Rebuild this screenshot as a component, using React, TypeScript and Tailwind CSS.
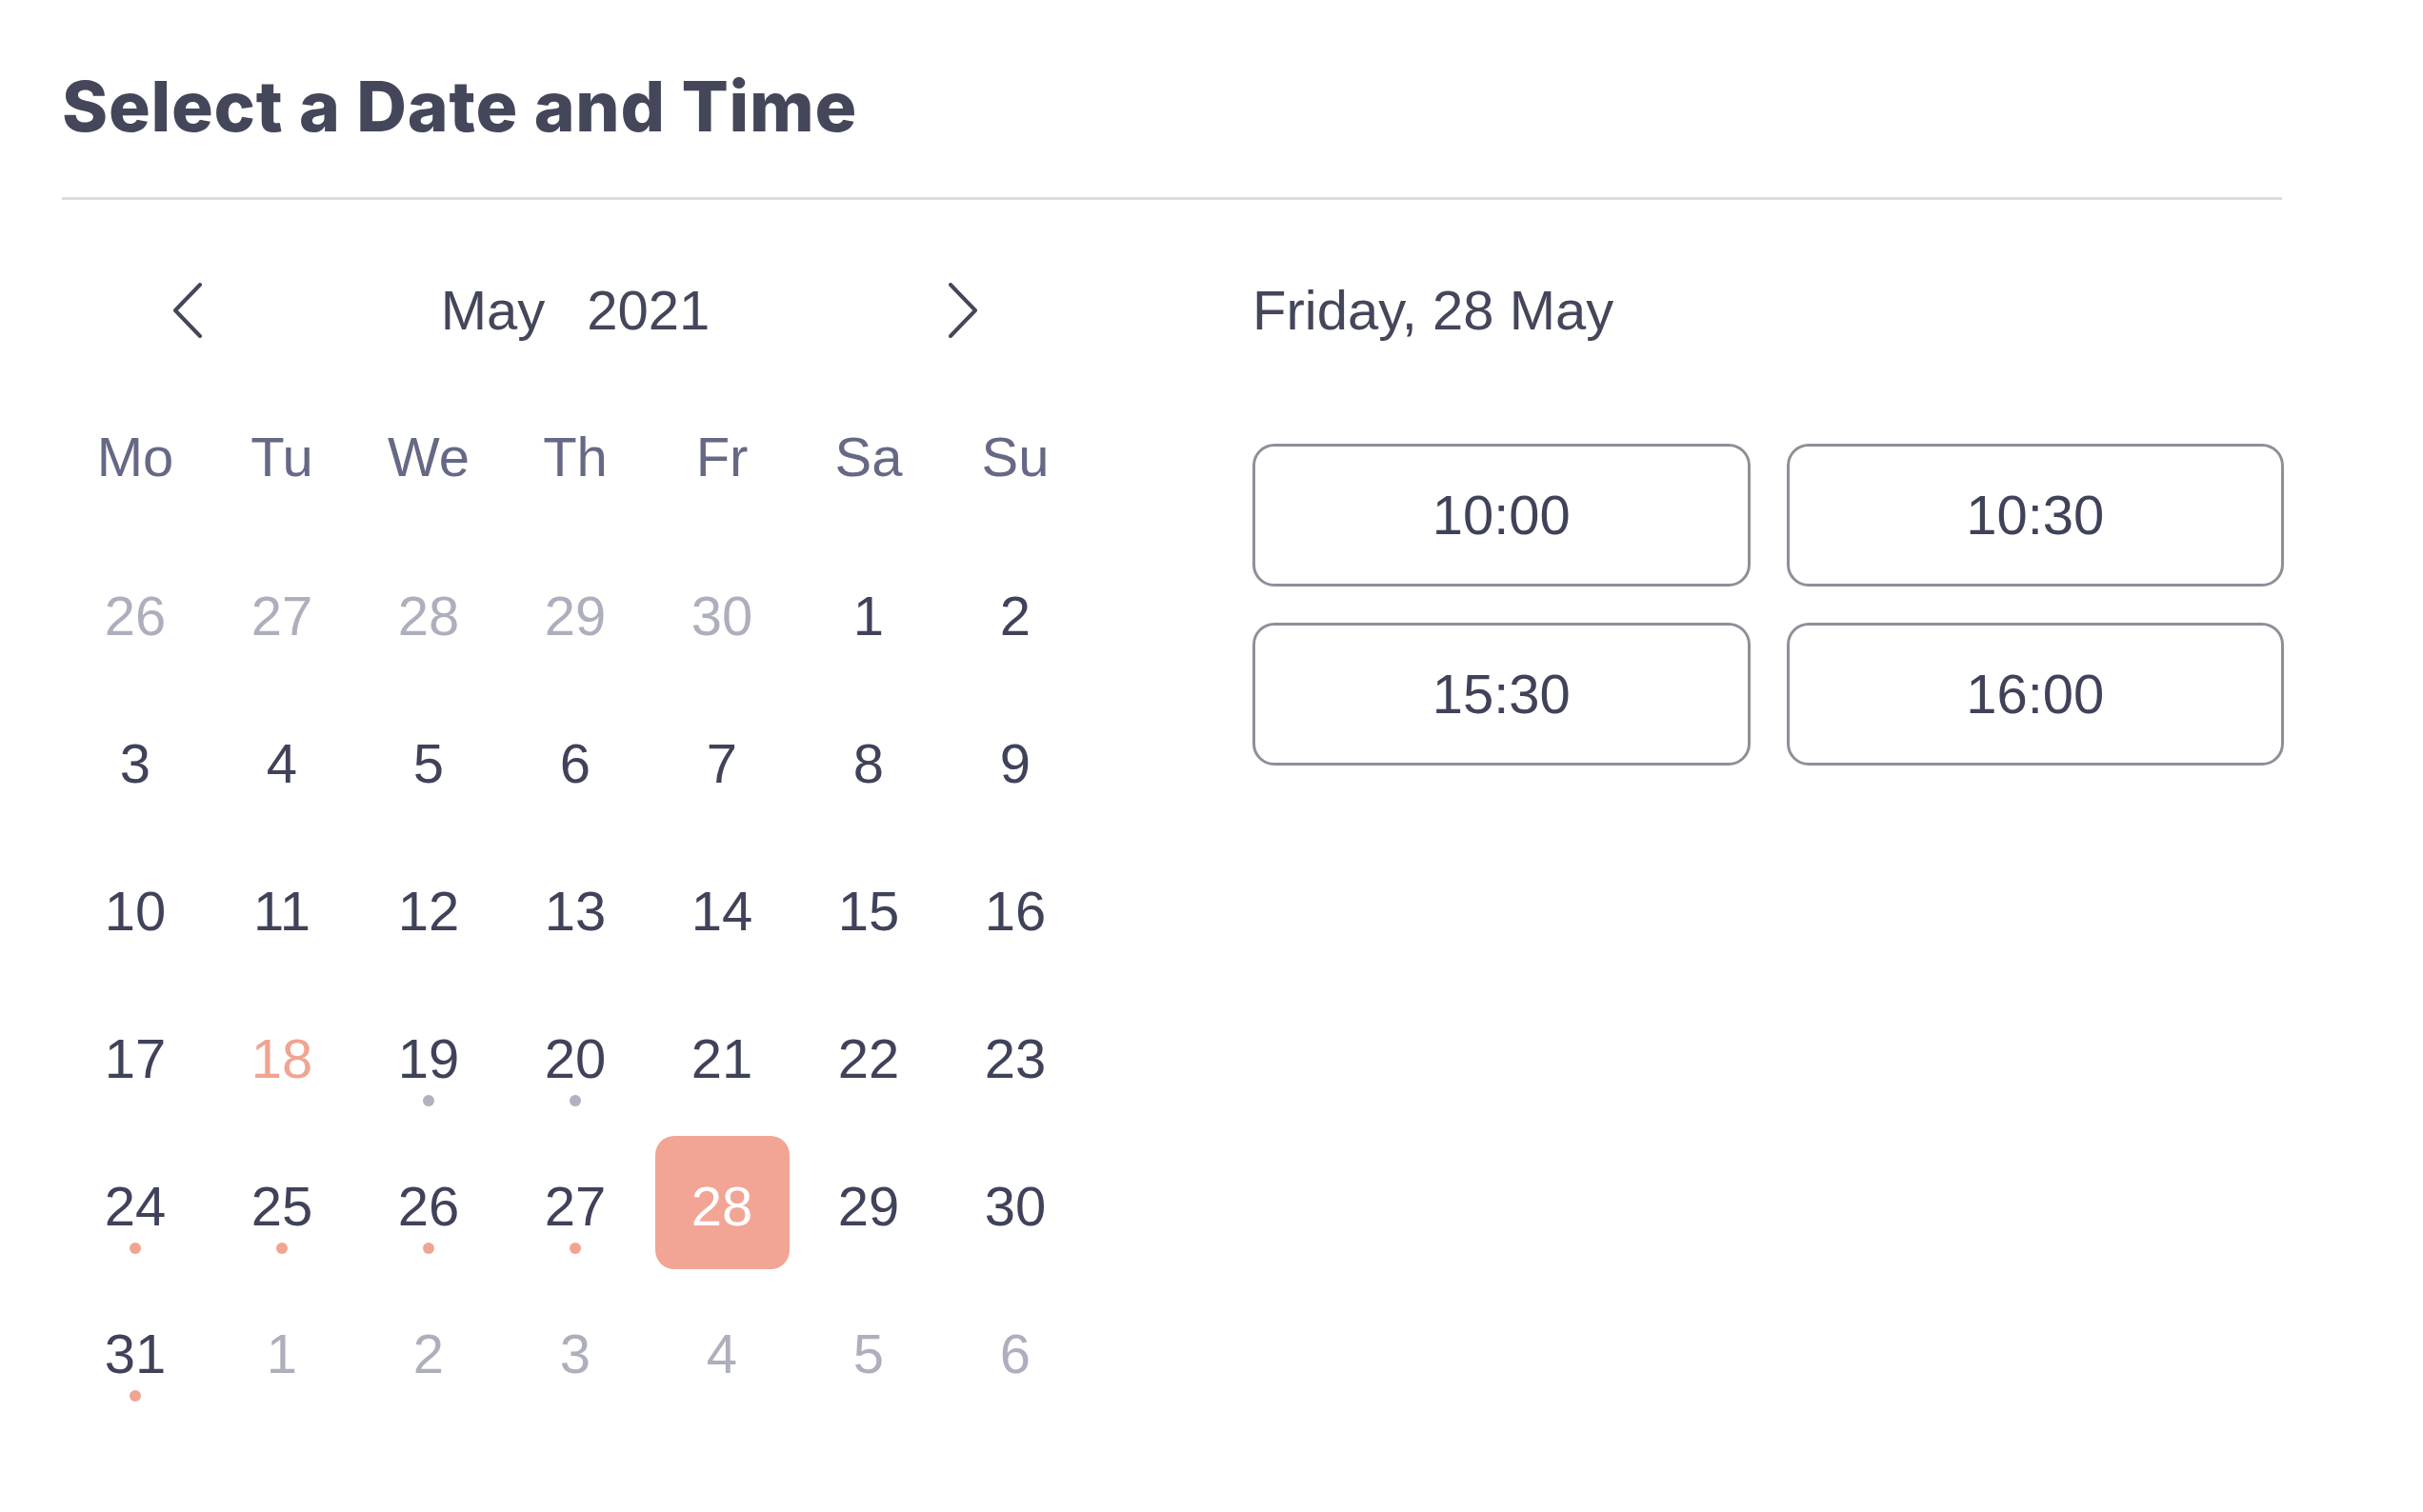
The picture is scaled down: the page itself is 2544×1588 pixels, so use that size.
import React from 'react';

type Day = {
  label: number;
  muted?: boolean;
  today?: boolean;
  selected?: boolean;
  dot?: 'gray' | 'salmon';
};

const weekdays = ['Mo', 'Tu', 'We', 'Th', 'Fr', 'Sa', 'Su'];

const days: Day[] = [
  { label: 26, muted: true },
  { label: 27, muted: true },
  { label: 28, muted: true },
  { label: 29, muted: true },
  { label: 30, muted: true },
  { label: 1 },
  { label: 2 },
  ...[3, 4, 5, 6, 7, 8, 9, 10, 11, 12, 13, 14, 15, 16, 17].map((n) => ({ label: n })),
  { label: 18, today: true },
  { label: 19, dot: 'gray' },
  { label: 20, dot: 'gray' },
  { label: 21 },
  { label: 22 },
  { label: 23 },
  { label: 24, dot: 'salmon' },
  { label: 25, dot: 'salmon' },
  { label: 26, dot: 'salmon' },
  { label: 27, dot: 'salmon' },
  { label: 28, selected: true },
  { label: 29 },
  { label: 30 },
  { label: 31, dot: 'salmon' },
  ...[1, 2, 3, 4, 5, 6].map((n) => ({ label: n, muted: true })),
];

const slots = ['10:00', '10:30', '15:30', '16:00'];

function Chevron({ dir }: { dir: 'left' | 'right' }) {
  return (
    <svg width="30" height="58" viewBox="0 0 30 58" fill="none">
      <path
        d={dir === 'left' ? 'M28 2 L2 29 L28 56' : 'M2 2 L28 29 L2 56'}
        stroke="#44465a"
        strokeWidth="4"
        strokeLinecap="round"
        strokeLinejoin="round"
      />
    </svg>
  );
}

function DayCell({ day }: { day: Day }) {
  let color = 'text-[#40425a]';
  if (day.muted) color = 'text-[#aeafbd]';
  if (day.today) color = 'text-[#f1a492]';

  return (
    <div className="relative flex h-[155px] w-[154px] items-center justify-center">
      {day.selected ? (
        <div className="mb-[8px] flex h-[140px] w-[141px] items-center justify-center rounded-[20px] bg-[#f2a594] pt-[8px] text-white">
          {day.label}
        </div>
      ) : (
        <span className={color}>{day.label}</span>
      )}
      {day.dot && (
        <span
          className={`absolute left-1/2 top-[116px] h-[12px] w-[12px] -translate-x-1/2 rounded-full ${
            day.dot === 'gray' ? 'bg-[#b1b2bf]' : 'bg-[#f1a492]'
          }`}
        />
      )}
    </div>
  );
}

export default function App() {
  return (
    <div
      className="min-h-screen bg-white pl-[65px] pt-[75px]"
      style={{ fontFamily: '"Liberation Sans", Arial, sans-serif' }}
    >
      <h1
        className="text-[73px] font-extrabold leading-none tracking-[0.01em] text-[#44465a]"
        style={{ fontFamily: 'Inter, "Liberation Sans", sans-serif' }}
      >
        Select a Date and Time
      </h1>
      <div className="mt-[59px] h-[3px] w-[2331px] bg-[#dcdce3]" />

      <div className="mt-[87px] flex text-[58px] leading-none text-[#40425a]">
        <div className="w-[1078px]">
          <div className="flex h-[58px] items-center justify-between px-[117px]">
            <Chevron dir="left" />
            <div className="flex gap-[44px] text-[#44465a]">
              <span>May</span>
              <span>2021</span>
            </div>
            <Chevron dir="right" />
          </div>

          <div className="mt-[96px] grid h-[58px] grid-cols-7 text-[#666985]">
            {weekdays.map((w) => (
              <div key={w} className="flex items-center justify-center">
                {w}
              </div>
            ))}
          </div>

          <div className="mt-[60px] grid grid-cols-7">
            {days.map((d, i) => (
              <DayCell key={i} day={d} />
            ))}
          </div>
        </div>

        <div className="ml-[172px] w-[1083px]">
          <div className="flex h-[58px] items-center text-[#44465a]">Friday, 28 May</div>
          <div className="mt-[111px] grid grid-cols-2 gap-[38px]">
            {slots.map((s) => (
              <button
                key={s}
                className="flex h-[150px] items-center justify-center rounded-[23px] border-[3px] border-[#8f8f99] bg-white text-[#40425a]"
              >
                {s}
              </button>
            ))}
          </div>
        </div>
      </div>
    </div>
  );
}
